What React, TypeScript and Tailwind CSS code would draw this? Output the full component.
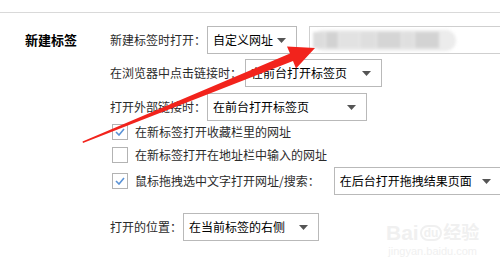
import type { ReactNode } from 'react'

const font = { fontFamily: '"Noto Sans CJK SC", "Noto Sans", sans-serif' }

function Caret() {
  return (
    <svg width="9" height="5" viewBox="0 0 9 5" className="shrink-0">
      <path d="M0 0h9L4.5 5z" fill="#555" />
    </svg>
  )
}

function Select({ text, width }: { text: string; width: string }) {
  return (
    <div
      className={`flex h-7 ${width} shrink-0 items-center justify-between border border-[#b9b9b9] bg-white pl-[5px] pr-[10px] text-[12px] text-black`}
    >
      <span className="whitespace-nowrap">{text}</span>
      <Caret />
    </div>
  )
}

function Check({ checked }: { checked: boolean }) {
  return (
    <div className="ml-[2px] flex h-4 w-4 shrink-0 items-center justify-center border border-[#b3b3b3] bg-white">
      {checked && (
        <svg width="10" height="8" viewBox="0 0 10 8">
          <path d="M1 4l3 3 5-6" fill="none" stroke="#5b93d6" strokeWidth="1.6" />
        </svg>
      )}
    </div>
  )
}

function Label({ children }: { children: ReactNode }) {
  return <span className="whitespace-nowrap text-[12px] text-[#2b2b2b]">{children}</span>
}

export default function App() {
  return (
    <div className="relative h-[265px] w-[500px] overflow-hidden bg-white" style={font}>
      <div className="h-3" />
      <div className="border-t border-[#d9d9d9]" />

      <div className="flex pt-[13px]">
        <div className="flex h-7 w-[110px] shrink-0 items-center pl-[25px] text-[13px] font-bold text-black">
          新建标签
        </div>

        <div className="flex flex-col">
          <div className="flex h-7 items-center">
            <Label>新建标签时打开：</Label>
            <div className="ml-px">
              <Select text="自定义网址" width="w-[90px]" />
            </div>
            <div className="ml-[12px] flex h-7 w-[200px] items-center border border-[#cfcfcf] pl-[3px]">
              <div className="flex h-[21px] w-[143px] items-center gap-px rounded-[10px] bg-[#ececec] blur-[1.5px]">
                <div className="h-4 w-3 bg-[#dcdcdc]" />
                <div className="h-4 w-3 bg-[#d2d2d2]" />
                <div className="h-4 w-5 bg-[#e2e2e2]" />
                <div className="h-4 w-4 bg-[#dedede]" />
                <div className="h-4 w-6 bg-[#d5d5d5]" />
                <div className="h-4 w-3 bg-[#dfdfdf]" />
                <div className="h-4 w-6 bg-[#d3d3d3]" />
              </div>
            </div>
          </div>

          <div className="mt-[5px] flex h-7 items-center">
            <Label>在浏览器中点击链接时：</Label>
            <div className="ml-[3px]">
              <Select text="在前台打开标签页" width="w-[137px]" />
            </div>
          </div>

          <div className="mt-[6px] flex h-7 items-center">
            <Label>打开外部链接时：</Label>
            <div className="ml-px">
              <Select text="在前台打开标签页" width="w-[160px]" />
            </div>
          </div>

          <div className="mt-px flex h-5 items-center gap-[7px]">
            <Check checked />
            <Label>在新标签打开收藏栏里的网址</Label>
          </div>

          <div className="mt-[3px] flex h-5 items-center gap-[7px]">
            <Check checked={false} />
            <Label>在新标签打开在地址栏中输入的网址</Label>
          </div>

          <div className="mt-[2px] flex h-7 items-center gap-[7px]">
            <Check checked />
            <Label>鼠标拖拽选中文字打开网址/搜索：</Label>
            <div className="ml-[7px]">
              <Select text="在后台打开拖拽结果页面" width="w-[168px]" />
            </div>
          </div>

          <div className="mt-[18px] flex h-7 items-center">
            <Label>打开的位置：</Label>
            <div className="ml-px">
              <Select text="在当前标签的右侧" width="w-[136px]" />
            </div>
          </div>
        </div>
      </div>

      {/* watermark */}
      <div className="pointer-events-none absolute left-[386px] top-[222px] flex flex-col items-center text-[#f0f0f0]">
        <div className="flex items-center text-[21px] font-bold leading-none" style={{ fontFamily: '"Liberation Sans", "Noto Sans CJK SC", sans-serif' }}>
          <span>Bai</span>
          <span className="mx-px rounded-full border-2 border-[#f0f0f0] px-[2px] text-[12px]">du</span>
          <span className="text-[18px]">经验</span>
        </div>
        <span className="mt-[3px] text-[11px] leading-none" style={{ fontFamily: '"Liberation Sans", sans-serif' }}>
          jingyan.baidu.com
        </span>
      </div>

      {/* red annotation arrow */}
      <svg className="pointer-events-none absolute left-0 top-0" width="500" height="265" viewBox="0 0 500 265">
        <polygon
          points="83,143 82.5,141.5 290,53.5 287,46.5 315,48 296,68.5 293,61"
          fill="#f2231c"
        />
      </svg>
    </div>
  )
}
